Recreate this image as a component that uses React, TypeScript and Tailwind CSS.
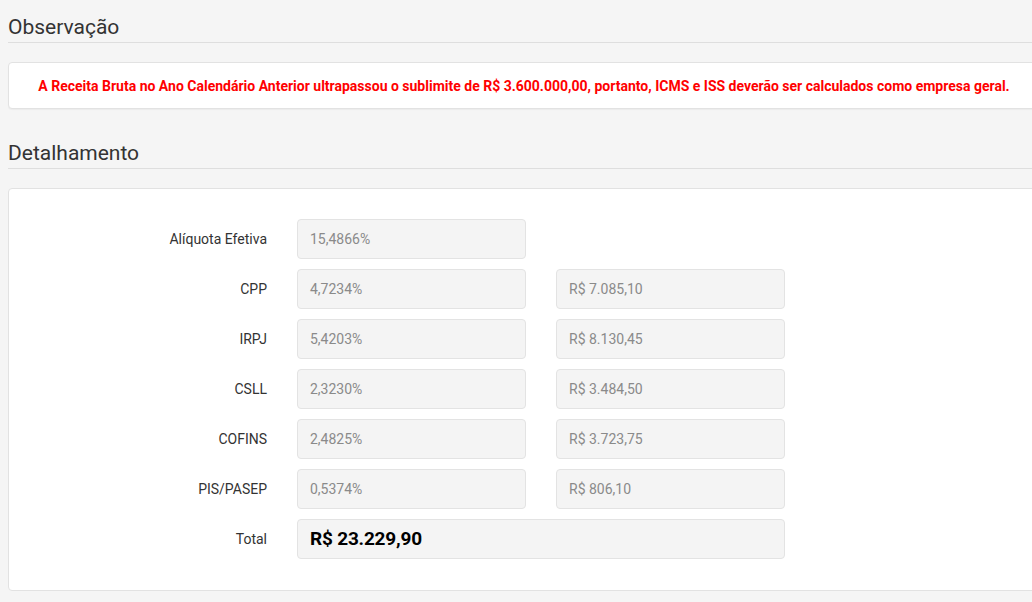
import React from 'react';

const rows = [
  { label: 'CPP', pct: '4,7234%', value: 'R$ 7.085,10' },
  { label: 'IRPJ', pct: '5,4203%', value: 'R$ 8.130,45' },
  { label: 'CSLL', pct: '2,3230%', value: 'R$ 3.484,50' },
  { label: 'COFINS', pct: '2,4825%', value: 'R$ 3.723,75' },
  { label: 'PIS/PASEP', pct: '0,5374%', value: 'R$ 806,10' },
];

function Field({ children, wide = false }: { children: React.ReactNode; wide?: boolean }) {
  return (
    <div
      className={`h-[40px] flex items-center px-3 rounded-[4px] border border-[#e3e3e3] bg-[#f4f4f4] text-[14px] text-[#8a8a8a] ${
        wide ? 'w-[488px]' : 'w-[229px]'
      }`}
    >
      {children}
    </div>
  );
}

function Label({ children }: { children: React.ReactNode }) {
  return <div className="w-[258px] text-right text-[14px] text-[#333]">{children}</div>;
}

export default function App() {
  return (
    <div className="w-screen min-h-screen overflow-hidden bg-[#f5f5f5] font-['Roboto',sans-serif]">
      <div className="w-[1048px] pl-2 pt-[14px]">
        <h2 className="text-[21px] leading-[26px] text-[#333] pb-[2px] border-b border-[#dedede]">Observação</h2>

        <div className="mt-[19px] h-[47px] pt-[2px] flex items-center justify-center bg-white border border-[#e2e2e2] rounded-[4px] shadow-[0_1px_1px_rgba(0,0,0,0.04)]">
          <p className="text-[14px] font-bold text-[#ff0000] pr-[8px]">
            A Receita Bruta no Ano Calendário Anterior ultrapassou o sublimite de R$ 3.600.000,00, portanto, ICMS e ISS deverão ser calculados como empresa geral.
          </p>
        </div>

        <h2 className="mt-[31px] text-[21px] leading-[26px] text-[#333] pb-[2px] border-b border-[#dedede]">Detalhamento</h2>

        <div className="mt-[19px] bg-white border border-[#e2e2e2] rounded-[4px] pt-[30px] pb-[31px] flex flex-col gap-[10px]">
          <div className="flex items-center gap-[30px]">
            <Label>Alíquota Efetiva</Label>
            <Field>15,4866%</Field>
          </div>
          {rows.map((r) => (
            <div key={r.label} className="flex items-center gap-[30px]">
              <Label>{r.label}</Label>
              <Field>{r.pct}</Field>
              <Field>{r.value}</Field>
            </div>
          ))}
          <div className="flex items-center gap-[30px]">
            <Label>Total</Label>
            <Field wide>
              <span className="text-[19px] font-bold text-black tracking-[-0.2px]">R$ 23.229,90</span>
            </Field>
          </div>
        </div>
      </div>
    </div>
  );
}
